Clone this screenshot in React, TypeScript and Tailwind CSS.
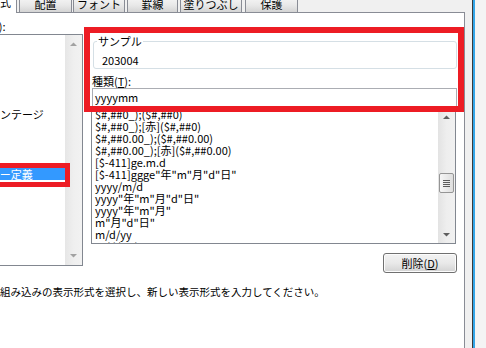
const categories = [
  "標準",
  "数値",
  "通貨",
  "会計",
  "日付",
  "時刻",
  "パーセンテージ",
  "分数",
  "指数",
  "文字列",
  "その他",
  "ユーザー定義",
];

const formats = [
  "$#,##0_);($#,##0)",
  "$#,##0_);[赤]($#,##0)",
  "$#,##0.00_);($#,##0.00)",
  "$#,##0.00_);[赤]($#,##0.00)",
  "[$-411]ge.m.d",
  '[$-411]ggge"年"m"月"d"日"',
  "yyyy/m/d",
  'yyyy"年"m"月"d"日"',
  'yyyy"年"m"月"',
  'm"月"d"日"',
  "m/d/yy",
  "m/d/yy h:mm",
];

const tabs = [
  { label: "配置", cls: "ml-[2px] w-[53px]" },
  { label: "フォント", cls: "ml-[1px] w-[52px]" },
  { label: "罫線", cls: "ml-[2px] w-[51px]" },
  { label: "塗りつぶし", cls: "ml-[2px] w-[62px]" },
  { label: "保護", cls: "ml-[3px] w-[53px]" },
];

const Arrow = ({ up, color }: { up?: boolean; color: string }) => (
  <svg width="7" height="4" viewBox="0 0 7 4">
    <path d={up ? "M0 4L3.5 0.5L7 4Z" : "M0 0L3.5 3.5L7 0Z"} fill={color} />
  </svg>
);

const App = () => {
  return (
    <div className="relative flex h-[348px] w-[486px] overflow-hidden bg-[#f0f0f0] font-['Noto_Sans_CJK_JP',sans-serif] text-[11px] text-black">
      <div className="flex w-[472px] flex-col">
        {/* tab strip */}
        <div className="ml-[-50px] mt-[-4px] flex h-[16px] items-end">
          <div className="relative z-10 mb-[-1px] flex h-[17px] w-[67px] items-center justify-end rounded-t-[2px] border border-b-0 border-[#898c95] bg-white pb-[6px] pr-[5px] leading-none">
            表示形式
          </div>
          {tabs.map((tab) => (
            <div
              key={tab.label}
              className={`${tab.cls} flex h-[15px] items-center justify-center rounded-t-[2px] border border-b-0 border-[#898c95] bg-linear-to-b from-[#f4f4f4] via-[#e9e9e9] to-[#d4d4d4] pb-[1px] leading-none`}
            >
              {tab.label}
            </div>
          ))}
        </div>

        {/* panel */}
        <div className="ml-[-50px] w-[515px] flex-1 border-r border-t border-[#898c95] bg-white">
          <div className="flex">
            {/* category list */}
            <div className="ml-[15px] flex w-[118px] flex-col pt-[7px]">
              <div className="ml-[1px] h-[12px] leading-[12px]">
                分類(<span className="underline">C</span>):
              </div>
              <div className="mt-[2px] flex h-[232px] border border-[#828790]">
                <ul className="flex-1 overflow-hidden pt-[1px]">
                  {categories.map((c) => (
                    <li
                      key={c}
                      className={`h-[12px] whitespace-nowrap pl-[1px] leading-[12px] ${
                        c === "ユーザー定義" ? "bg-[#3399ff] text-white" : ""
                      }`}
                    >
                      {c}
                    </li>
                  ))}
                </ul>
                <div className="flex w-[17px] flex-col items-center justify-between bg-linear-to-r from-[#e6e6e6] via-[#efefef] to-[#f2f2f2] py-[7px]">
                  <Arrow up color="#a2a2a2" />
                  <Arrow color="#a2a2a2" />
                </div>
              </div>
            </div>

            {/* right column */}
            <div className="ml-[8px] flex w-[366px] flex-col pt-[22px]">
              <fieldset className="ml-[2px] w-[364px] rounded-[3px] border border-[#d5dfe5] pb-[2px]">
                <legend className="ml-[3px] px-[1px] leading-[12px]">サンプル</legend>
                <div className="pl-[8px] pt-[7px] leading-[12px]">203004</div>
              </fieldset>
              <div className="ml-[1px] mt-[6px] h-[12px] leading-[12px]">
                種類(<span className="underline">T</span>):
              </div>
              <div className="ml-[1px] mt-[1px] h-[19px] w-[365px] border border-[#abadb3] pl-[2px] leading-[17px]">
                yyyymm
              </div>
              <div className="flex h-[137px] w-[365px] border border-[#828790]">
                <ul className="flex-1 overflow-hidden">
                  {formats.map((f) => (
                    <li key={f} className="h-[12px] whitespace-nowrap pl-[3px] leading-[12px]">
                      {f}
                    </li>
                  ))}
                </ul>
                <div className="flex w-[17px] flex-col items-center bg-linear-to-r from-[#e3e3e3] via-[#eeeeee] to-[#f1f1f1]">
                  <div className="flex h-[17px] items-center">
                    <Arrow up color="#5e5e5e" />
                  </div>
                  <div className="flex flex-1 flex-col items-center">
                    <div className="mt-[48px] flex h-[20px] w-[15px] flex-col items-center justify-center gap-[1px] rounded-[2px] border border-[#959595] bg-linear-to-r from-[#f6f6f6] to-[#dedede]">
                      <div className="h-px w-[7px] bg-[#5c5c5c]" />
                      <div className="h-px w-[7px] bg-[#5c5c5c]" />
                      <div className="h-px w-[7px] bg-[#5c5c5c]" />
                      <div className="h-px w-[7px] bg-[#5c5c5c]" />
                    </div>
                  </div>
                  <div className="flex h-[17px] items-center">
                    <Arrow color="#5e5e5e" />
                  </div>
                </div>
              </div>
              <div className="mt-[9px] flex justify-end">
                <button className="flex h-[20px] w-[74px] items-center justify-center rounded-[3px] border border-[#707070] bg-linear-to-b from-[#f3f3f3] via-[#e9e9e9] to-[#d3d3d3] leading-none shadow-[inset_0_0_0_1px_#fcfcfc]">
                  削除(<span className="underline">D</span>)
                </button>
              </div>
            </div>
          </div>

          <p className="ml-[8px] mt-[13px] whitespace-nowrap text-[10.5px] leading-[12px]">
            基になる組み込みの表示形式を選択し、新しい表示形式を入力してください。
          </p>
        </div>
      </div>
      <div className="w-px bg-[#3b3b3b]" />
      <div className="w-[2px] bg-[#33a6e8]" />
      <div className="flex-1 bg-[#f4f4f4]" />

      {/* red annotation frames */}
      <div className="absolute left-[84px] top-[27px] h-[85px] w-[380px] border-[6px] border-[#ed1c24]" />
      <div className="absolute left-[-10px] top-[163px] h-[24px] w-[80px] border-[5px] border-[#ed1c24]" />
    </div>
  );
};

export default App;
